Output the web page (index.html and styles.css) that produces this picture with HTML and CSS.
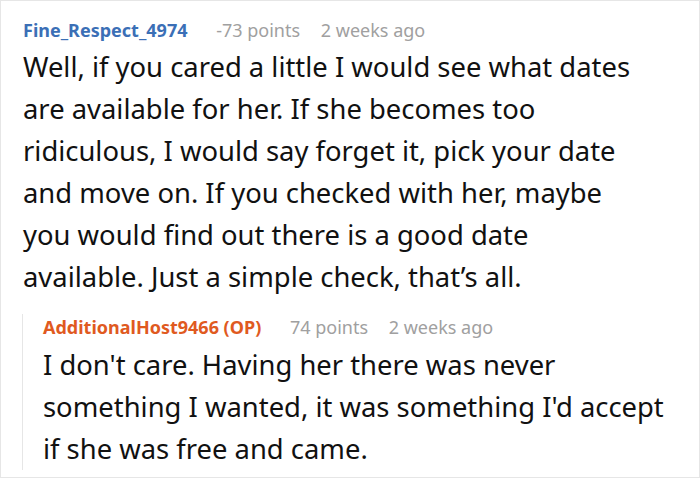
FILE: index.html
```html
<!DOCTYPE html>
<html lang="en">
<head>
    <meta charset="UTF-8">
    <meta name="viewport" content="width=device-width, initial-scale=1.0">
    <title>Comment thread</title>
    <link rel="stylesheet" href="styles.css">
</head>
<body>
    <div class="thread">
        <div class="comment">
            <div class="comment-head">
                <span class="author">Fine_Respect_4974</span>
                <span class="meta">-73 points</span>
                <span class="meta">2 weeks ago</span>
            </div>
            <p class="comment-body">Well, if you cared a little I would see what dates are available for her. If she becomes too ridiculous, I would say forget it, pick your date and move on. If you checked with her, maybe you would find out there is a good date available. Just a simple check, that’s all.</p>
        </div>

        <div class="comment reply">
            <div class="comment-head">
                <span class="author op">AdditionalHost9466 (OP)</span>
                <span class="meta">74 points</span>
                <span class="meta">2 weeks ago</span>
            </div>
            <p class="comment-body">I don't care. Having her there was never something I wanted, it was something I'd accept if she was free and came.</p>
        </div>
    </div>
</body>
</html>
```

FILE: styles.css
```css
html, body {
    margin: 0;
    background-color: #ffffff;
}
.thread {
    box-sizing: border-box;
    height: 478px;
    border: 1px solid #e6e6e6;
    padding: 16px 47px 0 22px;
    font-family: 'Noto Sans', 'Open Sans', sans-serif;
    color: #111111;
    overflow: hidden;
}
.comment-head {
    font-size: 18px;
    line-height: 26px;
    white-space: nowrap;
}
.author {
    font-weight: bold;
    color: #3b6fb6;
    margin-right: 24px;
}
.author.op {
    color: #e05a1f;
}
.meta {
    color: #a0a0a0;
    margin-right: 16px;
}
.comment-body {
    margin: 3px 0 0;
    font-size: 27.4px;
    line-height: 42px;
}
.reply {
    margin: 26px -12px 0 -1px;
    border-left: 1px solid #e6e6e6;
    padding-left: 20px;
}
.reply .comment-head {
    margin-top: -10px;
}
.reply .comment-body {
    margin: 4px 0 -11px;
}
```
